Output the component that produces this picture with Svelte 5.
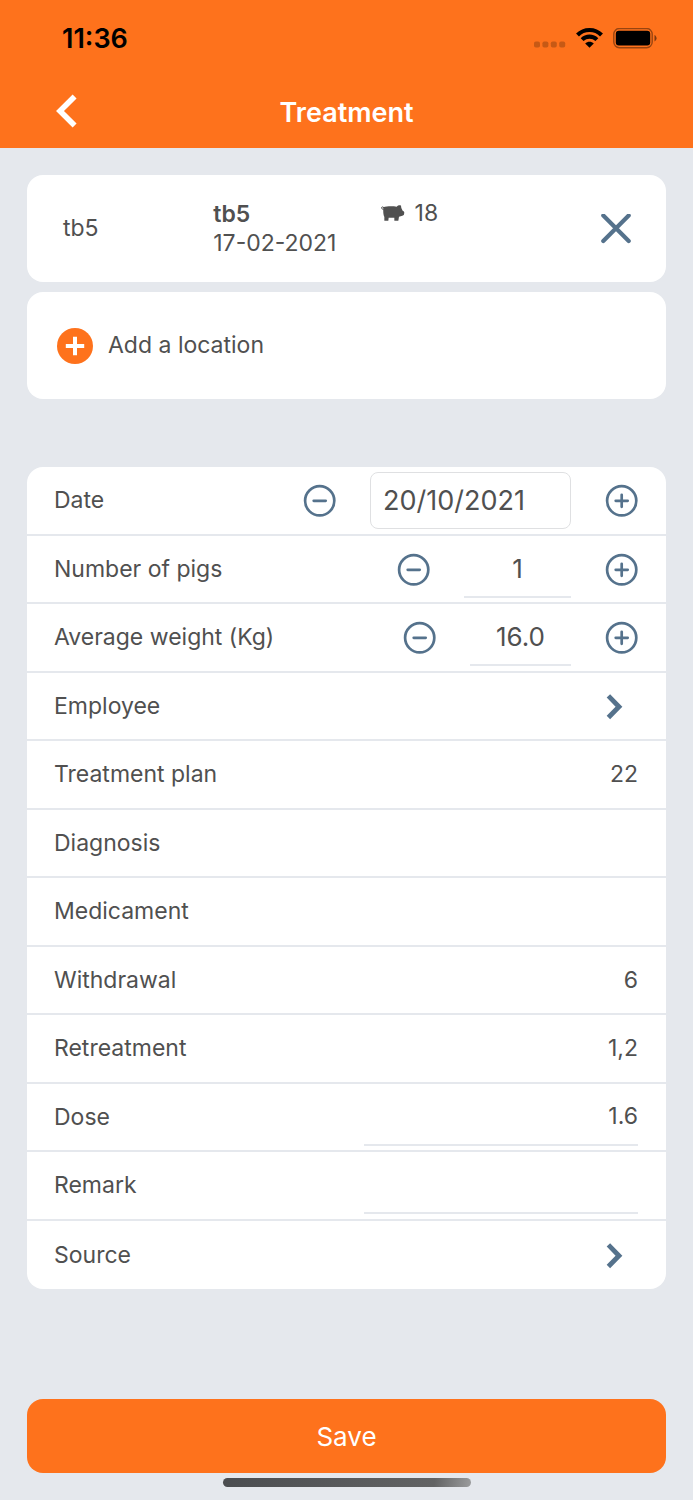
<script>
  let date = $state('20/10/2021');
  let pigs = $state('1');
  let weight = $state('16.0');
  let dose = $state('1.6');
  let remark = $state('');

  const details = [
    { label: 'Treatment plan', value: '22' },
    { label: 'Diagnosis', value: '' },
    { label: 'Medicament', value: '' },
    { label: 'Withdrawal', value: '6' },
    { label: 'Retreatment', value: '1,2' }
  ];

  function stepDate(days) {
    const [d, m, y] = date.split('/').map(Number);
    const next = new Date(y, m - 1, d + days);
    const pad = (n) => String(n).padStart(2, '0');
    date = `${pad(next.getDate())}/${pad(next.getMonth() + 1)}/${next.getFullYear()}`;
  }
  function stepPigs(n) {
    pigs = String(Math.max(0, Number(pigs) + n));
  }
  function stepWeight(n) {
    weight = Math.max(0, Number(weight) + n).toFixed(1);
  }
</script>

{#snippet stepper(label, plus, action)}
  <button class="icon-button" type="button" aria-label={label} onclick={action}>
    <svg width="33" height="33" viewBox="0 0 33 33" fill="none" stroke="currentColor" aria-hidden="true">
      <circle cx="16.7" cy="16.8" r="14.6" stroke-width="2.7" />
      <path d={plus ? 'M10.7 16.8h12M16.7 10.8v12' : 'M10.7 16.8h12'} stroke-width="2.7" stroke-linecap="round" />
    </svg>
  </button>
{/snippet}

{#snippet chevron()}
  <svg width="33" height="33" viewBox="0 0 33 33" fill="none" stroke="currentColor" stroke-width="4.8" aria-hidden="true">
    <path d="M3.4 5.9L14 16.7L3.4 27.5" />
  </svg>
{/snippet}

<div class="page">
  <header>
    <div class="status">
      <span>11:36</span>
      <div class="signals">
        <svg width="32" height="20" viewBox="0 0 32 20" fill="#000" fill-opacity=".22" aria-hidden="true">
          <rect x="0" y="13.5" width="6" height="6" rx="1.8" /><rect x="8.4" y="13.5" width="6" height="6" rx="1.8" />
          <rect x="16.8" y="13.5" width="6" height="6" rx="1.8" /><rect x="25.2" y="13.5" width="6" height="6" rx="1.8" />
        </svg>
        <svg width="27" height="20" viewBox="0 0 27 20" aria-hidden="true">
          <path d="M1.5 7C8 .4 19 .4 25.5 7M6.1 11.6C10.2 7.6 16.8 7.6 20.9 11.6" fill="none" stroke="#000" stroke-width="4.1" />
          <path d="M9.2 15.6C11.6 13 15.4 13 17.8 15.6L13.5 19.8Z" />
        </svg>
        <svg width="44" height="21" viewBox="0 0 44 21" aria-hidden="true">
          <rect x=".8" y=".5" width="38.4" height="19.2" rx="5.6" fill="none" stroke="#000" stroke-opacity=".4" stroke-width="1.4" />
          <rect x="2.8" y="2.7" width="34.4" height="14.8" rx="3" />
          <path d="M41.5 7C44.2 8.4 44.2 12 41.5 13.4Z" fill-opacity=".5" />
        </svg>
      </div>
    </div>
    <nav>
      <button class="back" type="button" aria-label="Back">
        <svg width="24" height="36" viewBox="0 0 24 36" fill="none" stroke="currentColor" stroke-width="5.6" aria-hidden="true">
          <path d="M20.6 2.4L6 16.9L20.6 31.5" />
        </svg>
      </button>
      <h1>Treatment</h1>
    </nav>
  </header>

  <main>
    <section class="card location">
      <span>tb5</span>
      <div class="batch">
        <strong>tb5</strong>
        <span>17-02-2021</span>
      </div>
      <div class="count">
        <svg width="24" height="17" viewBox="0 0 72 51" fill="currentColor" aria-hidden="true">
          <path d="M7 7C18 3 36 4 47 5C51 1 57 0 60 2L61 9L65 17Q70 18 70 23Q70 31 64 32L54 35L52 47H40V38H23L22 47H10V36C7 30 6 20 7 7Z" />
          <path d="M8 13C4 13 1 11 2 7Q4 4 9 8" fill="none" stroke="currentColor" stroke-width="3" />
        </svg>
        <span>18</span>
      </div>
      <button class="icon-button" type="button" aria-label="Remove location">
        <svg width="30" height="30" viewBox="0 0 30 30" stroke="currentColor" stroke-width="4.2" stroke-linecap="round" aria-hidden="true">
          <path d="M2.3 1.6L27.7 27M27.7 1.6L2.3 27" />
        </svg>
      </button>
    </section>

    <button class="card add" type="button">
      <svg width="36" height="36" viewBox="0 0 36 36" aria-hidden="true">
        <circle cx="18" cy="18" r="18" fill="#fe721c" />
        <path d="M8.8 18h18.4M18 8.8v18.4" stroke="#fff" stroke-width="4" />
      </svg>
      <span>Add a location</span>
    </button>

    <form class="list" onsubmit={(e) => e.preventDefault()} id="treatment">
      <div class="row">
        <label for="date">Date</label>
        <div class="control">
          {@render stepper('Previous day', false, () => stepDate(-1))}
          <input id="date" class="date" type="text" bind:value={date} />
          {@render stepper('Next day', true, () => stepDate(1))}
        </div>
      </div>
      <div class="row">
        <label for="pigs">Number of pigs</label>
        <div class="control">
          {@render stepper('Fewer pigs', false, () => stepPigs(-1))}
          <input id="pigs" class="number" type="text" inputmode="numeric" bind:value={pigs} />
          {@render stepper('More pigs', true, () => stepPigs(1))}
        </div>
      </div>
      <div class="row">
        <label for="weight">Average weight (Kg)</label>
        <div class="control">
          {@render stepper('Lower weight', false, () => stepWeight(-1))}
          <input id="weight" class="number decimal" type="text" inputmode="decimal" bind:value={weight} />
          {@render stepper('Higher weight', true, () => stepWeight(1))}
        </div>
      </div>
      <button class="row" type="button"><span>Employee</span>{@render chevron()}</button>
      {#each details as item}
        <div class="row"><span>{item.label}</span><span>{item.value}</span></div>
      {/each}
      <div class="row">
        <label for="dose">Dose</label>
        <input id="dose" class="line" type="text" inputmode="decimal" bind:value={dose} />
      </div>
      <div class="row">
        <label for="remark">Remark</label>
        <input id="remark" class="line" type="text" bind:value={remark} />
      </div>
      <button class="row" type="button"><span>Source</span>{@render chevron()}</button>
    </form>
  </main>

  <footer>
    <button class="save" type="submit" form="treatment">Save</button>
    <div class="home"></div>
  </footer>
</div>

<style>
  :global(body) {
    margin: 0;
    background: #e5e8ed;
  }
  .page {
    min-height: 100vh;
    box-sizing: border-box;
    display: flex;
    flex-direction: column;
    font-family: Inter, 'Liberation Sans', sans-serif;
    font-size: 23px;
    line-height: 29px;
    color: #505050;
  }
  button,
  input {
    box-sizing: border-box;
    margin: 0;
    padding: 0;
    border: 0;
    background: none;
    font: inherit;
    color: inherit;
  }
  button {
    cursor: pointer;
  }
  svg {
    display: block;
    flex: none;
  }
  header {
    background: #fe721c;
  }
  .status {
    display: flex;
    justify-content: space-between;
    align-items: center;
    height: 76px;
    padding: 0 36px 0 62px;
    font-size: 27px;
    font-weight: 600;
    color: #000;
  }
  .signals {
    display: flex;
    align-items: center;
    gap: 10px;
  }
  nav {
    display: grid;
    grid-template-columns: 1fr auto 1fr;
    align-items: center;
    height: 72px;
    padding: 0 54px;
    color: #fff;
  }
  .back {
    justify-self: start;
  }
  h1 {
    margin: 0;
    font-size: 27px;
    font-weight: 600;
  }
  main {
    display: flex;
    flex-direction: column;
    padding: 27px 27px 0;
  }
  .card {
    min-height: 107px;
    margin-bottom: 10px;
    border-radius: 16px;
    background: #fff;
  }
  .location {
    display: grid;
    grid-template-columns: 150fr 167fr 220fr auto;
    align-items: center;
    padding: 0 35px 0 36px;
  }
  .batch {
    display: flex;
    flex-direction: column;
  }
  .batch strong {
    font-weight: 600;
  }
  .count {
    display: flex;
    align-items: center;
    align-self: start;
    gap: 10px;
    padding-top: 24px;
  }
  .icon-button {
    flex: none;
    color: #55728c;
  }
  .add {
    display: flex;
    align-items: center;
    gap: 15px;
    padding: 0 30px;
    text-align: left;
  }
  .list {
    margin-top: 58px;
    border-radius: 16px;
    background: #fff;
    overflow: hidden;
  }
  .row {
    display: flex;
    justify-content: space-between;
    align-items: center;
    width: 100%;
    min-height: 69px;
    box-sizing: border-box;
    padding: 0 28px 0 27px;
    border-bottom: 2px solid #e5e8ed;
    text-align: left;
  }
  .row:nth-child(even) {
    min-height: 68px;
  }
  .row:last-child {
    border-bottom: 0;
  }
  .row > svg {
    color: #55728c;
  }
  .control {
    display: flex;
    align-items: center;
    gap: 34px;
  }
  input {
    height: 57px;
    min-width: 0;
    outline: 0;
  }
  .date {
    width: 201px;
    padding: 0 12px;
    border: 1px solid #dfe0e2;
    border-radius: 8px;
    font-size: 27px;
  }
  .number,
  .line {
    border-bottom: 2px solid #e5e8ed;
  }
  .number {
    width: 107px;
    text-align: center;
    font-size: 26px;
  }
  .decimal {
    width: 101px;
  }
  .line {
    width: 47%;
    text-align: right;
  }
  footer {
    display: flex;
    flex-direction: column;
    align-items: center;
    gap: 5px;
    margin-top: auto;
    padding: 40px 27px 13px;
  }
  .save {
    width: 100%;
    height: 74px;
    border-radius: 16px;
    background: #fe721c;
    color: #fff;
    font-size: 26px;
  }
  .home {
    width: 248px;
    height: 9px;
    border-radius: 5px;
    background: linear-gradient(100deg, #4b4d50, #626364 85%, #9b9c9d);
  }
</style>
